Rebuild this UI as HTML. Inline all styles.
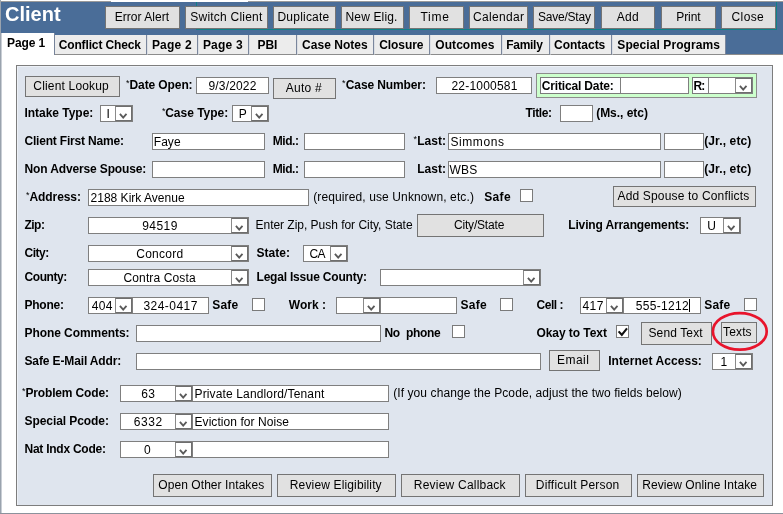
<!DOCTYPE html>
<html lang="en"><head><meta charset="utf-8"><title>Client</title>
<style>
html,body{margin:0;padding:0;background:#fff;}
body{width:783px;height:514px;position:relative;overflow:hidden;font-family:"Liberation Sans",sans-serif;font-size:12px;color:#000;}
body div{position:absolute;box-sizing:content-box;white-space:nowrap;}
#w{left:0;top:0;width:783px;height:514px;will-change:transform;}
.title{font-size:20px;font-weight:bold;color:#fff;line-height:24px;}
.btn{background:#e1e1e1;border:1px solid #747474;text-align:center;font-size:12px;}
.lb{line-height:14px;height:14px;font-size:12px;}
.b{font-weight:bold;letter-spacing:-0.2px;}
.star{font-size:9px;line-height:10px;font-weight:normal;color:#000}
.in{background:#fff;border:1px solid #7f7f7f;font-size:12px;overflow:hidden}
.sel{background:#fff;border:1px solid #7f7f7f;font-size:12px;overflow:hidden}
.arr{right:0;top:0;width:15px;border:1px solid #6e6e6e;border-left:1px solid #8a8a8a;border-right:1px solid #6e6e6e;background:#fff}
.chk{width:11px;height:11px;background:#fff;border:1px solid #7a7a7a;}
.tab{background:#ececec;border-left:1px solid #dcdfe4;border-right:1px solid #7a869c;border-bottom:1px solid #8c8c8c;}
.panel{background:#dfe5ee;border:1px solid #7d7d7d;box-shadow:inset 1px 1px 0 #edf1f7;}
.green{background:#ccffcc;border:1px solid #8c8c8c;}
.cell{background:#fcfdff;border:1px solid #7a7a7a;}
</style></head>
<body>
<div id="w">
<div class="" style="left:0px;top:0px;width:1px;height:514px;background:#9aa3ae"></div>
<div class="" style="left:1px;top:1px;width:110px;height:1px;background:#9a9a9a"></div>
<div class="" style="left:248px;top:1px;width:535px;height:1px;background:#9a9a9a"></div>
<div class="" style="left:1px;top:2px;width:782px;height:52px;background:#4a6d98"></div>
<div class="" style="left:1px;top:54px;width:782px;height:1px;background:#8c8c8c"></div>
<div class="" style="left:0px;top:513px;width:783px;height:1px;background:#8b929c"></div>
<div class="" style="left:196px;top:2px;width:1px;height:28px;background:#0f8088"></div>
<div class="" style="left:196px;top:29px;width:581px;height:1px;background:#0f8088"></div>
<div class="" style="left:776px;top:2px;width:1px;height:28px;background:#0f8088"></div>
<div class="title" style="left:5px;top:2px;">Client</div>
<div class="btn" style="left:105px;top:6px;width:73px;height:21px;line-height:21px;text-align:left;"><span style="position:absolute;left:8.80px;top:0;letter-spacing:0.020px">Error Alert</span></div>
<div class="btn" style="left:185px;top:6px;width:81px;height:21px;line-height:21px;text-align:left;"><span style="position:absolute;left:4.30px;top:0;letter-spacing:0.221px">Switch Client</span></div>
<div class="btn" style="left:273px;top:6px;width:61px;height:21px;line-height:21px;text-align:left;"><span style="position:absolute;left:3.50px;top:0;letter-spacing:0.206px">Duplicate</span></div>
<div class="btn" style="left:341px;top:6px;width:61px;height:21px;line-height:21px;text-align:left;"><span style="position:absolute;left:3.50px;top:0;letter-spacing:0.150px">New Elig.</span></div>
<div class="btn" style="left:409px;top:6px;width:53px;height:21px;line-height:21px;text-align:left;"><span style="position:absolute;left:10.50px;top:0;letter-spacing:0.733px">Time</span></div>
<div class="btn" style="left:469px;top:6px;width:57px;height:21px;line-height:21px;text-align:left;"><span style="position:absolute;left:3.10px;top:0;letter-spacing:0.314px">Calendar</span></div>
<div class="btn" style="left:533px;top:6px;width:60px;height:21px;line-height:21px;text-align:left;"><span style="position:absolute;left:4.10px;top:0;letter-spacing:-0.238px">Save/Stay</span></div>
<div class="btn" style="left:601px;top:6px;width:52px;height:21px;line-height:21px;text-align:left;"><span style="position:absolute;left:14.70px;top:0;letter-spacing:0.275px">Add</span></div>
<div class="btn" style="left:661px;top:6px;width:53px;height:21px;line-height:21px;text-align:left;"><span style="position:absolute;left:14.30px;top:0;letter-spacing:-0.100px">Print</span></div>
<div class="btn" style="left:721px;top:6px;width:53px;height:21px;line-height:21px;text-align:left;"><span style="position:absolute;left:9.50px;top:0;letter-spacing:0.400px">Close</span></div>
<div class="" style="left:1px;top:33px;width:53px;height:23px;background:#fff"></div>
<div class="lb b" style="left:7px;top:36px;letter-spacing:-0.12px">Page 1</div>
<div class="tab" style="left:54px;top:35px;width:91px;height:19px;"><span style="position:absolute;left:3.70px;top:3px;line-height:14px;font-weight:bold;letter-spacing:-0.135px">Conflict Check</span></div>
<div class="tab" style="left:147px;top:35px;width:49px;height:19px;"><span style="position:absolute;left:3.90px;top:3px;line-height:14px;font-weight:bold;letter-spacing:0.200px">Page 2</span></div>
<div class="tab" style="left:198px;top:35px;width:49px;height:19px;"><span style="position:absolute;left:3.90px;top:3px;line-height:14px;font-weight:bold;letter-spacing:0.200px">Page 3</span></div>
<div class="tab" style="left:249px;top:35px;width:46px;height:19px;"><span style="position:absolute;left:7.40px;top:3px;line-height:14px;font-weight:bold;letter-spacing:0.000px">PBI</span></div>
<div class="tab" style="left:297px;top:35px;width:75px;height:19px;"><span style="position:absolute;left:4.10px;top:3px;line-height:14px;font-weight:bold;letter-spacing:0.028px">Case Notes</span></div>
<div class="tab" style="left:374px;top:35px;width:54px;height:19px;"><span style="position:absolute;left:4.20px;top:3px;line-height:14px;font-weight:bold;letter-spacing:-0.067px">Closure</span></div>
<div class="tab" style="left:430px;top:35px;width:70px;height:19px;"><span style="position:absolute;left:4.30px;top:3px;line-height:14px;font-weight:bold;letter-spacing:0.057px">Outcomes</span></div>
<div class="tab" style="left:502px;top:35px;width:46px;height:19px;"><span style="position:absolute;left:3.30px;top:3px;line-height:14px;font-weight:bold;letter-spacing:-0.300px">Family</span></div>
<div class="tab" style="left:550px;top:35px;width:60px;height:19px;"><span style="position:absolute;left:3.10px;top:3px;line-height:14px;font-weight:bold;letter-spacing:-0.021px">Contacts</span></div>
<div class="tab" style="left:612px;top:35px;width:112px;height:19px;"><span style="position:absolute;left:4.30px;top:3px;line-height:14px;font-weight:bold;letter-spacing:0.087px">Special Programs</span></div>
<div class="" style="left:54px;top:33px;width:1px;height:22px;background:#76839a"></div>
<div class="" style="left:1px;top:33px;width:1px;height:480px;background:#c9ced5"></div>
<div class="panel" style="left:16px;top:65px;width:755px;height:439px;"></div>
<div class="btn" style="left:25px;top:76px;width:93px;height:19px;line-height:19px;text-align:left;"><span style="position:absolute;left:7.30px;top:0;letter-spacing:0.175px">Client Lookup</span></div>
<div class="star" style="left:126px;top:78px;">*</div>
<div class="lb b" style="left:129.50px;top:78px;letter-spacing:-0.100px;">Date Open:</div>
<div class="in" style="left:196px;top:77px;width:71px;height:15px;line-height:17px;"><span style="position:absolute;left:11.50px;top:0;letter-spacing:0.157px">9/3/2022</span></div>
<div class="btn" style="left:273px;top:78px;width:61px;height:19px;line-height:19px;text-align:left;"><span style="position:absolute;left:11.80px;top:0;letter-spacing:0.220px">Auto #</span></div>
<div class="star" style="left:342px;top:78px;">*</div>
<div class="lb b" style="left:345.80px;top:78px;letter-spacing:-0.114px;">Case Number:</div>
<div class="in" style="left:436px;top:77px;width:94px;height:15px;line-height:17px;"><span style="position:absolute;left:14.50px;top:0;letter-spacing:0.194px">22-1000581</span></div>
<div class="green" style="left:536px;top:73px;width:219px;height:23px;"></div>
<div class="cell" style="left:540px;top:77px;width:147px;height:15px;"></div>
<div class="lb b" style="left:541.70px;top:79px;letter-spacing:-0.150px;">Critical Date:</div>
<div class="in" style="left:620px;top:77px;width:67px;height:15px;line-height:17px;"></div>
<div class="cell" style="left:692px;top:77px;width:59px;height:15px;"></div>
<div class="lb b" style="left:693.50px;top:79px;letter-spacing:-0.950px;">R:</div>
<div class="sel" style="left:708px;top:77px;width:43px;height:15px;line-height:17px;"><div class="arr" style="height:13px"><svg width="9" height="7" viewBox="0 0 9 7" style="position:absolute;left:2.8px;top:6px"><path d="M0.9 0.8 L4.2 4.6 L7.5 0.8" fill="none" stroke="#5a5a5a" stroke-width="1.8"/></svg></div></div>
<div class="lb b" style="left:24.50px;top:106px;letter-spacing:-0.032px;">Intake Type:</div>
<div class="sel" style="left:100px;top:105px;width:31px;height:15px;line-height:17px;"><span style="position:absolute;left:5.50px;top:0;letter-spacing:-0.950px">I</span><div class="arr" style="height:13px"><svg width="9" height="7" viewBox="0 0 9 7" style="position:absolute;left:2.8px;top:6px"><path d="M0.9 0.8 L4.2 4.6 L7.5 0.8" fill="none" stroke="#5a5a5a" stroke-width="1.8"/></svg></div></div>
<div class="star" style="left:162px;top:106px;">*</div>
<div class="lb b" style="left:165.20px;top:106px;letter-spacing:-0.006px;">Case Type:</div>
<div class="sel" style="left:232px;top:105px;width:35px;height:15px;line-height:17px;"><span style="position:absolute;left:5.80px;top:0;letter-spacing:-0.200px">P</span><div class="arr" style="height:13px"><svg width="9" height="7" viewBox="0 0 9 7" style="position:absolute;left:2.8px;top:6px"><path d="M0.9 0.8 L4.2 4.6 L7.5 0.8" fill="none" stroke="#5a5a5a" stroke-width="1.8"/></svg></div></div>
<div class="lb b" style="left:525.50px;top:106px;letter-spacing:-0.410px;">Title:</div>
<div class="in" style="left:560px;top:105px;width:31px;height:15px;line-height:17px;"></div>
<div class="lb b" style="left:596.20px;top:106px;letter-spacing:-0.033px;">(Ms., etc)</div>
<div class="lb b" style="left:24.50px;top:134px;letter-spacing:-0.194px;">Client First Name:</div>
<div class="in" style="left:152px;top:133px;width:111px;height:15px;line-height:17px;"><span style="position:absolute;left:0.80px;top:0;letter-spacing:0.033px">Faye</span></div>
<div class="lb b" style="left:272.80px;top:134px;letter-spacing:-0.475px;">Mid.:</div>
<div class="in" style="left:304px;top:133px;width:99px;height:15px;line-height:17px;"></div>
<div class="star" style="left:413.5px;top:134px;">*</div>
<div class="lb b" style="left:417.20px;top:134px;letter-spacing:0.013px;">Last:</div>
<div class="in" style="left:448px;top:133px;width:211px;height:15px;line-height:17px;"><span style="position:absolute;left:1.50px;top:0;letter-spacing:0.567px">Simmons</span></div>
<div class="in" style="left:664px;top:133px;width:38px;height:15px;line-height:17px;"></div>
<div class="lb b" style="left:704.20px;top:134px;letter-spacing:0.122px;">(Jr., etc)</div>
<div class="lb b" style="left:24.50px;top:162px;letter-spacing:-0.136px;">Non Adverse Spouse:</div>
<div class="in" style="left:152px;top:161px;width:111px;height:15px;line-height:17px;"></div>
<div class="lb b" style="left:272.80px;top:162px;letter-spacing:-0.475px;">Mid.:</div>
<div class="in" style="left:304px;top:161px;width:99px;height:15px;line-height:17px;"></div>
<div class="lb b" style="left:417.20px;top:162px;letter-spacing:0.013px;">Last:</div>
<div class="in" style="left:448px;top:161px;width:211px;height:15px;line-height:17px;"><span style="position:absolute;left:0.50px;top:0;letter-spacing:0.225px">WBS</span></div>
<div class="in" style="left:664px;top:161px;width:38px;height:15px;line-height:17px;"></div>
<div class="lb b" style="left:704.20px;top:162px;letter-spacing:0.122px;">(Jr., etc)</div>
<div class="star" style="left:26px;top:190px;">*</div>
<div class="lb b" style="left:29.50px;top:190px;letter-spacing:-0.086px;">Address:</div>
<div class="in" style="left:88px;top:189px;width:219px;height:15px;line-height:17px;"><span style="position:absolute;left:1.50px;top:0;letter-spacing:0.017px">2188 Kirk Avenue</span></div>
<div class="lb" style="left:313.20px;top:190px;letter-spacing:0.118px;">(required, use Unknown, etc.)</div>
<div class="lb b" style="left:484.20px;top:190px;letter-spacing:0.350px;">Safe</div>
<div class="chk" style="left:520px;top:189px;"></div>
<div class="btn" style="left:613px;top:186px;width:141px;height:19px;line-height:19px;text-align:left;"><span style="position:absolute;left:3.50px;top:0;letter-spacing:0.168px">Add Spouse to Conflicts</span></div>
<div class="lb b" style="left:24.50px;top:218px;letter-spacing:-0.533px;">Zip:</div>
<div class="sel" style="left:88px;top:217px;width:159px;height:15px;line-height:17px;"><span style="position:absolute;left:53.20px;top:0;letter-spacing:0.437px">94519</span><div class="arr" style="height:13px"><svg width="9" height="7" viewBox="0 0 9 7" style="position:absolute;left:2.8px;top:6px"><path d="M0.9 0.8 L4.2 4.6 L7.5 0.8" fill="none" stroke="#5a5a5a" stroke-width="1.8"/></svg></div></div>
<div class="lb" style="left:255.50px;top:218px;letter-spacing:-0.025px;">Enter Zip, Push for City, State</div>
<div class="btn" style="left:417px;top:214px;width:125px;height:21px;line-height:21px;text-align:left;"><span style="position:absolute;left:36.00px;top:0;letter-spacing:-0.189px">City/State</span></div>
<div class="lb b" style="left:568.20px;top:218px;letter-spacing:-0.132px;">Living Arrangements:</div>
<div class="sel" style="left:700px;top:217px;width:39px;height:15px;line-height:17px;"><span style="position:absolute;left:6.20px;top:0;letter-spacing:-0.550px">U</span><div class="arr" style="height:13px"><svg width="9" height="7" viewBox="0 0 9 7" style="position:absolute;left:2.8px;top:6px"><path d="M0.9 0.8 L4.2 4.6 L7.5 0.8" fill="none" stroke="#5a5a5a" stroke-width="1.8"/></svg></div></div>
<div class="lb b" style="left:24.50px;top:246px;letter-spacing:-0.462px;">City:</div>
<div class="sel" style="left:88px;top:245px;width:159px;height:15px;line-height:17px;"><span style="position:absolute;left:47.20px;top:0;letter-spacing:0.292px">Concord</span><div class="arr" style="height:13px"><svg width="9" height="7" viewBox="0 0 9 7" style="position:absolute;left:2.8px;top:6px"><path d="M0.9 0.8 L4.2 4.6 L7.5 0.8" fill="none" stroke="#5a5a5a" stroke-width="1.8"/></svg></div></div>
<div class="lb b" style="left:256.50px;top:246px;letter-spacing:0.010px;">State:</div>
<div class="sel" style="left:303px;top:245px;width:43px;height:15px;line-height:17px;"><span style="position:absolute;left:5.50px;top:0;letter-spacing:-0.550px">CA</span><div class="arr" style="height:13px"><svg width="9" height="7" viewBox="0 0 9 7" style="position:absolute;left:2.8px;top:6px"><path d="M0.9 0.8 L4.2 4.6 L7.5 0.8" fill="none" stroke="#5a5a5a" stroke-width="1.8"/></svg></div></div>
<div class="lb b" style="left:24.50px;top:270px;letter-spacing:-0.417px;">County:</div>
<div class="sel" style="left:88px;top:269px;width:159px;height:15px;line-height:17px;"><span style="position:absolute;left:34.50px;top:0;letter-spacing:0.123px">Contra Costa</span><div class="arr" style="height:13px"><svg width="9" height="7" viewBox="0 0 9 7" style="position:absolute;left:2.8px;top:6px"><path d="M0.9 0.8 L4.2 4.6 L7.5 0.8" fill="none" stroke="#5a5a5a" stroke-width="1.8"/></svg></div></div>
<div class="lb b" style="left:256.50px;top:270px;letter-spacing:-0.200px;">Legal Issue County:</div>
<div class="sel" style="left:380px;top:269px;width:159px;height:15px;line-height:17px;"><div class="arr" style="height:13px"><svg width="9" height="7" viewBox="0 0 9 7" style="position:absolute;left:2.8px;top:6px"><path d="M0.9 0.8 L4.2 4.6 L7.5 0.8" fill="none" stroke="#5a5a5a" stroke-width="1.8"/></svg></div></div>
<div class="lb b" style="left:24.50px;top:298px;letter-spacing:-0.250px;">Phone:</div>
<div class="sel" style="left:88px;top:297px;width:43px;height:15px;line-height:17px;"><span style="position:absolute;left:2.80px;top:0;letter-spacing:0.250px">404</span><div class="arr" style="height:13px"><svg width="9" height="7" viewBox="0 0 9 7" style="position:absolute;left:2.8px;top:6px"><path d="M0.9 0.8 L4.2 4.6 L7.5 0.8" fill="none" stroke="#5a5a5a" stroke-width="1.8"/></svg></div></div>
<div class="in" style="left:132px;top:297px;width:75px;height:15px;line-height:17px;"><span style="position:absolute;left:10.50px;top:0;letter-spacing:0.443px">324-0417</span></div>
<div class="lb b" style="left:212.20px;top:298px;letter-spacing:0.250px;">Safe</div>
<div class="chk" style="left:252px;top:298px;"></div>
<div class="lb b" style="left:288.80px;top:298px;letter-spacing:0.000px;">Work :</div>
<div class="sel" style="left:336px;top:297px;width:43px;height:15px;line-height:17px;"><div class="arr" style="height:13px"><svg width="9" height="7" viewBox="0 0 9 7" style="position:absolute;left:2.8px;top:6px"><path d="M0.9 0.8 L4.2 4.6 L7.5 0.8" fill="none" stroke="#5a5a5a" stroke-width="1.8"/></svg></div></div>
<div class="in" style="left:380px;top:297px;width:75px;height:15px;line-height:17px;"></div>
<div class="lb b" style="left:460.50px;top:298px;letter-spacing:0.250px;">Safe</div>
<div class="chk" style="left:500px;top:298px;"></div>
<div class="lb b" style="left:536.50px;top:298px;letter-spacing:-0.450px;">Cell :</div>
<div class="sel" style="left:580px;top:297px;width:42px;height:15px;line-height:17px;"><span style="position:absolute;left:1.50px;top:0;letter-spacing:0.400px">417</span><div class="arr" style="height:13px"><svg width="9" height="7" viewBox="0 0 9 7" style="position:absolute;left:2.8px;top:6px"><path d="M0.9 0.8 L4.2 4.6 L7.5 0.8" fill="none" stroke="#5a5a5a" stroke-width="1.8"/></svg></div></div>
<div class="in" style="left:623px;top:297px;width:76px;height:15px;line-height:17px;"><span style="position:absolute;left:11.80px;top:0;letter-spacing:0.300px">555-1212</span></div>
<div class="" style="left:689px;top:299px;width:1px;height:13px;background:#000"></div>
<div class="lb b" style="left:704.20px;top:298px;letter-spacing:0.250px;">Safe</div>
<div class="chk" style="left:744px;top:298px;"></div>
<div class="lb b" style="left:24.50px;top:326px;letter-spacing:-0.064px;">Phone Comments:</div>
<div class="in" style="left:136px;top:325px;width:243px;height:15px;line-height:17px;"></div>
<div class="lb b" style="left:384.50px;top:326px;letter-spacing:-0.319px;">No&nbsp; phone</div>
<div class="chk" style="left:452px;top:325px;"></div>
<div class="lb b" style="left:536.50px;top:326px;letter-spacing:-0.068px;">Okay to Text</div>
<div class="chk" style="left:616px;top:325px;"><svg width="11" height="11" viewBox="0 0 11 11" style="position:absolute;left:0;top:0"><path d="M1.6 5.4 L4.8 8.8 L10 2.3" fill="none" stroke="#111" stroke-width="2.1"/></svg></div>
<div class="btn" style="left:641px;top:322px;width:69px;height:21px;line-height:20px;text-align:left;"><span style="position:absolute;left:6.50px;top:0;letter-spacing:0.119px">Send Text</span></div>
<div class="btn" style="left:721px;top:322px;width:34px;height:19px;line-height:19px;text-align:left;"><span style="position:absolute;left:1.10px;top:0;letter-spacing:0.125px">Texts</span></div>
<svg style="position:absolute;left:708px;top:308px" width="64" height="46" viewBox="0 0 64 46"><ellipse cx="31.8" cy="23.4" rx="26.9" ry="18.3" fill="none" stroke="#e8142c" stroke-width="2.7"/></svg>
<div class="lb b" style="left:24.50px;top:354px;letter-spacing:-0.131px;">Safe E-Mail Addr:</div>
<div class="in" style="left:136px;top:353px;width:403px;height:15px;line-height:17px;"></div>
<div class="btn" style="left:549px;top:350px;width:49px;height:19px;line-height:19px;text-align:left;"><span style="position:absolute;left:7.10px;top:0;letter-spacing:0.450px">Email</span></div>
<div class="lb b" style="left:608.20px;top:354px;letter-spacing:0.050px;">Internet Access:</div>
<div class="sel" style="left:712px;top:353px;width:39px;height:15px;line-height:17px;"><span style="position:absolute;left:7.50px;top:0;letter-spacing:-2.250px">1</span><div class="arr" style="height:13px"><svg width="9" height="7" viewBox="0 0 9 7" style="position:absolute;left:2.8px;top:6px"><path d="M0.9 0.8 L4.2 4.6 L7.5 0.8" fill="none" stroke="#5a5a5a" stroke-width="1.8"/></svg></div></div>
<div class="star" style="left:22px;top:386px;">*</div>
<div class="lb b" style="left:25.50px;top:386px;letter-spacing:-0.163px;">Problem Code:</div>
<div class="in" style="left:192px;top:385px;width:195px;height:15px;line-height:17px;"><span style="position:absolute;left:1.50px;top:0;letter-spacing:0.139px">Private Landlord/Tenant</span></div>
<div class="sel" style="left:120px;top:385px;width:71px;height:15px;line-height:17px;"><span style="position:absolute;left:20.20px;top:0;letter-spacing:0.350px">63</span><div class="arr" style="height:13px"><svg width="9" height="7" viewBox="0 0 9 7" style="position:absolute;left:2.8px;top:6px"><path d="M0.9 0.8 L4.2 4.6 L7.5 0.8" fill="none" stroke="#5a5a5a" stroke-width="1.8"/></svg></div></div>
<div class="lb" style="left:393.20px;top:386px;letter-spacing:0.085px;">(If you change the Pcode, adjust the two fields below)</div>
<div class="lb b" style="left:24.50px;top:414px;letter-spacing:-0.073px;">Special Pcode:</div>
<div class="in" style="left:192px;top:413px;width:195px;height:15px;line-height:17px;"><span style="position:absolute;left:1.50px;top:0;letter-spacing:0.062px">Eviction for Noise</span></div>
<div class="sel" style="left:120px;top:413px;width:71px;height:15px;line-height:17px;"><span style="position:absolute;left:12.80px;top:0;letter-spacing:0.600px">6332</span><div class="arr" style="height:13px"><svg width="9" height="7" viewBox="0 0 9 7" style="position:absolute;left:2.8px;top:6px"><path d="M0.9 0.8 L4.2 4.6 L7.5 0.8" fill="none" stroke="#5a5a5a" stroke-width="1.8"/></svg></div></div>
<div class="lb b" style="left:24.50px;top:442px;letter-spacing:-0.250px;">Nat Indx Code:</div>
<div class="in" style="left:192px;top:441px;width:195px;height:15px;line-height:17px;"></div>
<div class="sel" style="left:120px;top:441px;width:71px;height:15px;line-height:17px;"><span style="position:absolute;left:23.10px;top:0;letter-spacing:0.550px">0</span><div class="arr" style="height:13px"><svg width="9" height="7" viewBox="0 0 9 7" style="position:absolute;left:2.8px;top:6px"><path d="M0.9 0.8 L4.2 4.6 L7.5 0.8" fill="none" stroke="#5a5a5a" stroke-width="1.8"/></svg></div></div>
<div class="btn" style="left:153px;top:474px;width:117px;height:21px;line-height:21px;text-align:left;"><span style="position:absolute;left:4.30px;top:0;letter-spacing:0.068px">Open Other Intakes</span></div>
<div class="btn" style="left:277px;top:474px;width:117px;height:21px;line-height:21px;text-align:left;"><span style="position:absolute;left:11.80px;top:0;letter-spacing:0.144px">Review Eligibility</span></div>
<div class="btn" style="left:401px;top:474px;width:117px;height:21px;line-height:21px;text-align:left;"><span style="position:absolute;left:11.80px;top:0;letter-spacing:0.218px">Review Callback</span></div>
<div class="btn" style="left:525px;top:474px;width:105px;height:21px;line-height:21px;text-align:left;"><span style="position:absolute;left:9.80px;top:0;letter-spacing:0.200px">Difficult Person</span></div>
<div class="btn" style="left:637px;top:474px;width:125px;height:21px;line-height:21px;text-align:left;"><span style="position:absolute;left:4.20px;top:0;letter-spacing:0.068px">Review Online Intake</span></div>
</div>
</body></html>
